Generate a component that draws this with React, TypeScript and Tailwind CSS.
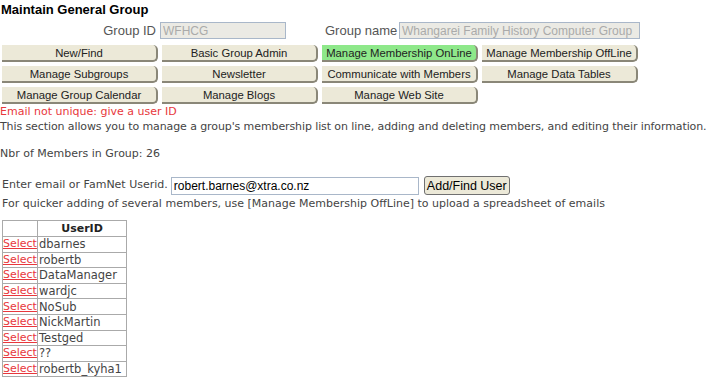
import React from 'react'

const buttons = [
  'New/Find',
  'Basic Group Admin',
  'Manage Membership OnLine',
  'Manage Membership OffLine',
  'Manage Subgroups',
  'Newsletter',
  'Communicate with Members',
  'Manage Data Tables',
  'Manage Group Calendar',
  'Manage Blogs',
  'Manage Web Site',
]

const users = ['dbarnes', 'robertb', 'DataManager', 'wardjc', 'NoSub', 'NickMartin', 'Testged', '??', 'robertb_kyha1']

export default function App() {
  return (
    <div className="w-[716px] h-[379px] overflow-hidden bg-white text-[#444] font-['DejaVu_Sans',Verdana,sans-serif] text-[11px]">
      <div className="pl-[1px] pt-[2px] font-['Liberation_Sans',Arial,sans-serif] text-[13px] font-bold leading-[16px] text-black">
        Maintain General Group
      </div>

      <div className="flex items-center h-[17px] mt-[4px] font-['Liberation_Sans',Arial,sans-serif] text-[13px] text-[#555] whitespace-nowrap">
        <span className="w-[158px] text-right pr-[2px]">Group ID</span>
        <input
          readOnly
          value="WFHCG"
          className="ml-[2px] w-[126px] h-[17px] border border-[#a9b7c9] bg-[#ebeae4] px-[2px] text-[12px] text-[#aaa] outline-none"
        />
        <span className="ml-[39px] w-[72px]">Group name</span>
        <input
          readOnly
          value="Whangarei Family History Computer Group"
          className="ml-[2px] w-[241px] h-[17px] border border-[#a9b7c9] bg-[#ebeae4] px-[2px] text-[12px] text-[#aaa] outline-none"
        />
      </div>

      <div className="grid grid-cols-[156px_156px_156px_156px] gap-x-[4px] gap-y-[4px] ml-[2px] mt-[6px] font-['Liberation_Sans',Arial,sans-serif] text-[11.3px] text-[#222]">
        {buttons.map((b) => (
          <div
            key={b}
            className={
              'h-[17px] leading-[16px] text-center whitespace-nowrap border-b-2 border-r-2 border-[#8a8778] rounded-r-[5px] ' +
              (b === 'Manage Membership OnLine' ? 'bg-[#8ee88a]' : 'bg-[#ece9d8]')
            }
          >
            {b}
          </div>
        ))}
      </div>

      <div className="leading-[15px] text-[#e8373c]">Email not unique: give a user ID</div>
      <div className="leading-[15px] whitespace-nowrap tracking-[-0.1px]">
        This section allows you to manage a group's membership list on line, adding and deleting members, and editing their information.
      </div>
      <div className="mt-[12px] leading-[15px]">Nbr of Members in Group: 26</div>

      <div className="flex items-center mt-[15px] h-[19px] pl-[2px]">
        <span>Enter email or FamNet Userid.</span>
        <input
          readOnly
          value="robert.barnes@xtra.co.nz"
          className="ml-[3px] w-[248px] h-[18px] border border-[#a9b7c9] px-[2px] font-['Liberation_Sans',Arial,sans-serif] text-[12px] text-black outline-none"
        />
        <button className="ml-[5px] w-[86px] h-[19px] rounded-[3px] border border-[#707070] bg-[#ece9d8] font-['Liberation_Sans',Arial,sans-serif] text-[12.5px] text-black leading-[16px]">
          Add/Find User
        </button>
      </div>
      <div className="pl-[2px] leading-[15px] mt-[1px]">
        For quicker adding of several members, use [Manage Membership OffLine] to upload a spreadsheet of emails
      </div>

      <table className="ml-[2px] mt-[9px] border-collapse border border-[#aaa]">
        <thead>
          <tr className="h-[16px]">
            <th className="w-[35px] border border-[#aaa] p-0"></th>
            <th className="w-[89px] border border-[#aaa] p-0 text-center font-bold text-[#222] leading-[14px]">UserID</th>
          </tr>
        </thead>
        <tbody>
          {users.map((u) => (
            <tr key={u} className="h-[15.6px]">
              <td className="border border-[#aaa] p-0 leading-[14px]">
                <a className="text-[#e8373c] underline">Select</a>
              </td>
              <td className="border border-[#aaa] p-0 pl-[1px] leading-[14px] text-[11.5px]">{u}</td>
            </tr>
          ))}
        </tbody>
      </table>
    </div>
  )
}
